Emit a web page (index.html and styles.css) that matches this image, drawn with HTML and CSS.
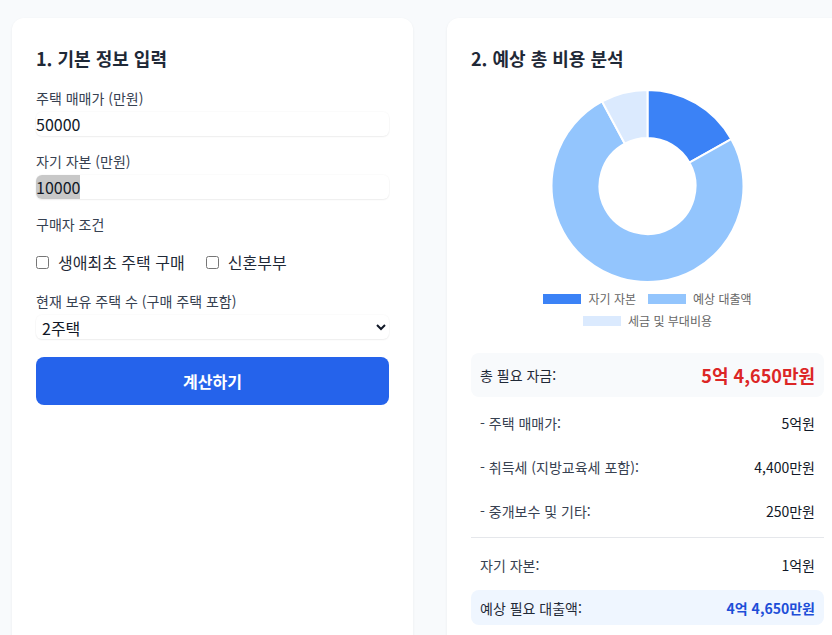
FILE: index.html
```html
<!DOCTYPE html>
<html lang="ko">
	<head>
		<meta charset="utf-8">
		<title>주택 구매 비용 계산기</title>
		<link rel="stylesheet" href="styles.css">
	</head>
	<body>
		<div class="layout">
			<section class="card">
				<h2 class="cardTitle">1. 기본 정보 입력</h2>
				<div class="field">
					<label class="fieldLabel" for="price">주택 매매가 (만원)</label>
					<input id="price" class="textInput" type="number" value="50000">
				</div>
				<div class="field">
					<label class="fieldLabel" for="equity">자기 자본 (만원)</label>
					<input id="equity" class="textInput" type="number" value="10000">
				</div>
				<div class="field conditions">
					<span class="fieldLabel">구매자 조건</span>
					<div class="checkRow">
						<label class="check"><input type="checkbox"><span>생애최초 주택 구매</span></label>
						<label class="check"><input type="checkbox"><span>신혼부부</span></label>
					</div>
				</div>
				<div class="field">
					<label class="fieldLabel" for="houses">현재 보유 주택 수 (구매 주택 포함)</label>
					<select id="houses" class="selectInput">
						<option>1주택</option>
						<option selected>2주택</option>
						<option>3주택 이상</option>
					</select>
				</div>
				<button class="calcButton" type="button">계산하기</button>
			</section>

			<section class="card">
				<h2 class="cardTitle">2. 예상 총 비용 분석</h2>
				<svg class="donut" width="353" height="200" viewBox="0 0 353 200">
					<path d="M176.5 4 A96 96 0 0 1 260.23 53.03 L218.36 76.52 A48 48 0 0 0 176.5 52 Z" fill="#3b82f6" stroke="#fff" stroke-width="2"/>
					<path d="M260.23 53.03 A96 96 0 1 1 131.09 15.42 L153.80 57.71 A48 48 0 1 0 218.36 76.52 Z" fill="#93c5fd" stroke="#fff" stroke-width="2"/>
					<path d="M131.09 15.42 A96 96 0 0 1 176.5 4 L176.5 52 A48 48 0 0 0 153.80 57.71 Z" fill="#dbeafe" stroke="#fff" stroke-width="2"/>
				</svg>
				<div class="legend">
					<div class="legendRow">
						<span class="legendItem"><i class="swatch own"></i>자기 자본</span>
						<span class="legendItem"><i class="swatch loan"></i>예상 대출액</span>
					</div>
					<div class="legendRow">
						<span class="legendItem"><i class="swatch tax"></i>세금 및 부대비용</span>
					</div>
				</div>

				<div class="summary">
					<div class="sumRow totalRow">
						<span>총 필요 자금:</span>
						<span class="totalValue">5억 4,650만원</span>
					</div>
					<div class="details">
						<div class="sumRow">
							<span>- 주택 매매가:</span>
							<span class="value">5억원</span>
						</div>
						<div class="sumRow">
							<span>- 취득세 (지방교육세 포함):</span>
							<span class="value">4,400만원</span>
						</div>
						<div class="sumRow">
							<span>- 중개보수 및 기타:</span>
							<span class="value">250만원</span>
						</div>
					</div>
					<hr class="divider">
					<div class="sumRow">
						<span>자기 자본:</span>
						<span class="value">1억원</span>
					</div>
					<div class="sumRow loanRow">
						<span>예상 필요 대출액:</span>
						<span class="loanValue">4억 4,650만원</span>
					</div>
				</div>
			</section>
		</div>
		<script src="script.js"></script>
	</body>
</html>
```

FILE: styles.css
```css
html, body{
	margin: 0;
	background: #f8fafc;
	overflow: hidden;
}
body{
	font-family: "Noto Sans CJK KR", "Noto Sans", sans-serif;
	color: #1f2937;
}
.layout{
	display: grid;
	grid-template-columns: 401px 401px;
	column-gap: 34px;
	padding: 18px 12px;
	width: 900px;
}
.card{
	background: #fff;
	border-radius: 12px;
	box-shadow: 0 1px 3px rgba(15, 23, 42, 0.06);
	padding: 26px 24px 40px;
	min-height: 640px;
}
.cardTitle{
	margin: 0 0 16px;
	font-size: 18px;
	line-height: 28px;
	font-weight: 700;
	color: #1f2937;
}
.field{
	margin-bottom: 15px;
}
.conditions{
	margin-bottom: 17px;
}
.fieldLabel{
	display: block;
	font-size: 14px;
	line-height: 20px;
	color: #374151;
	margin-bottom: 4px;
}
.textInput{
	display: block;
	box-sizing: border-box;
	width: 100%;
	height: 24px;
	padding: 0;
	border: 0;
	border-radius: 6px;
	font: inherit;
	font-size: 16px;
	color: #111827;
	background: #fff;
	box-shadow: 0 1px 2px rgba(0, 0, 0, 0.06), 0 0 0 1px rgba(0, 0, 0, 0.015);
	outline: none;
	-moz-appearance: textfield;
}
.textInput::-webkit-inner-spin-button{
	-webkit-appearance: none;
}
.textInput::selection{
	background: #c8c8c8;
	color: #111827;
}
.checkRow{
	display: flex;
	gap: 21px;
	margin-top: 16px;
}
.check{
	display: flex;
	align-items: center;
	font-size: 16px;
	line-height: 24px;
	color: #1f2937;
}
.check input{
	margin: 0 9px 0 0;
	width: 13px;
	height: 13px;
}
.selectInput{
	display: block;
	width: 100%;
	height: 24px;
	border: 0;
	border-radius: 6px;
	font: inherit;
	font-size: 16px;
	color: #111827;
	background: #fff;
	box-shadow: 0 1px 2px rgba(0, 0, 0, 0.06), 0 0 0 1px rgba(0, 0, 0, 0.015);
	padding: 0 0 0 2px;
}
.calcButton{
	display: block;
	width: 100%;
	height: 48px;
	margin-top: 18px;
	border: 0;
	border-radius: 8px;
	background: #2563eb;
	color: #fff;
	font: inherit;
	font-size: 16px;
	font-weight: 700;
}
.donut{
	display: block;
	margin-top: -2px;
}
.legend{
	margin-top: 5px;
	font-size: 12px;
	line-height: 16px;
	color: #666;
}
.legendRow{
	display: flex;
	justify-content: center;
	gap: 12px;
	margin-bottom: 6px;
}
.legendItem{
	display: flex;
	align-items: center;
	gap: 7px;
}
.swatch{
	display: inline-block;
	width: 38px;
	height: 10px;
}
.own{ background: #3b82f6; }
.loan{ background: #93c5fd; }
.tax{ background: #dbeafe; }
.summary{
	margin-top: 24px;
	font-size: 14px;
	color: #374151;
}
.sumRow{
	display: flex;
	justify-content: space-between;
	align-items: center;
	height: 44px;
	padding: 0 9px;
}
.totalRow{
	background: #f8fafc;
	border-radius: 8px;
	color: #1f2937;
}
.totalValue{
	font-size: 18px;
	font-weight: 700;
	color: #dc2626;
}
.details{
	margin-top: 4px;
}
.value{
	color: #111827;
}
.divider{
	border: 0;
	border-top: 1px solid #e5e7eb;
	margin: 4px 0 5px;
}
.loanRow{
	height: 35px;
	margin-top: 3px;
	background: #eff6ff;
	border-radius: 8px;
	color: #1f2937;
}
.loanValue{
	font-weight: 700;
	color: #1d4ed8;
}
```

FILE: script.js
```js
document.getElementById('equity').select();
```
